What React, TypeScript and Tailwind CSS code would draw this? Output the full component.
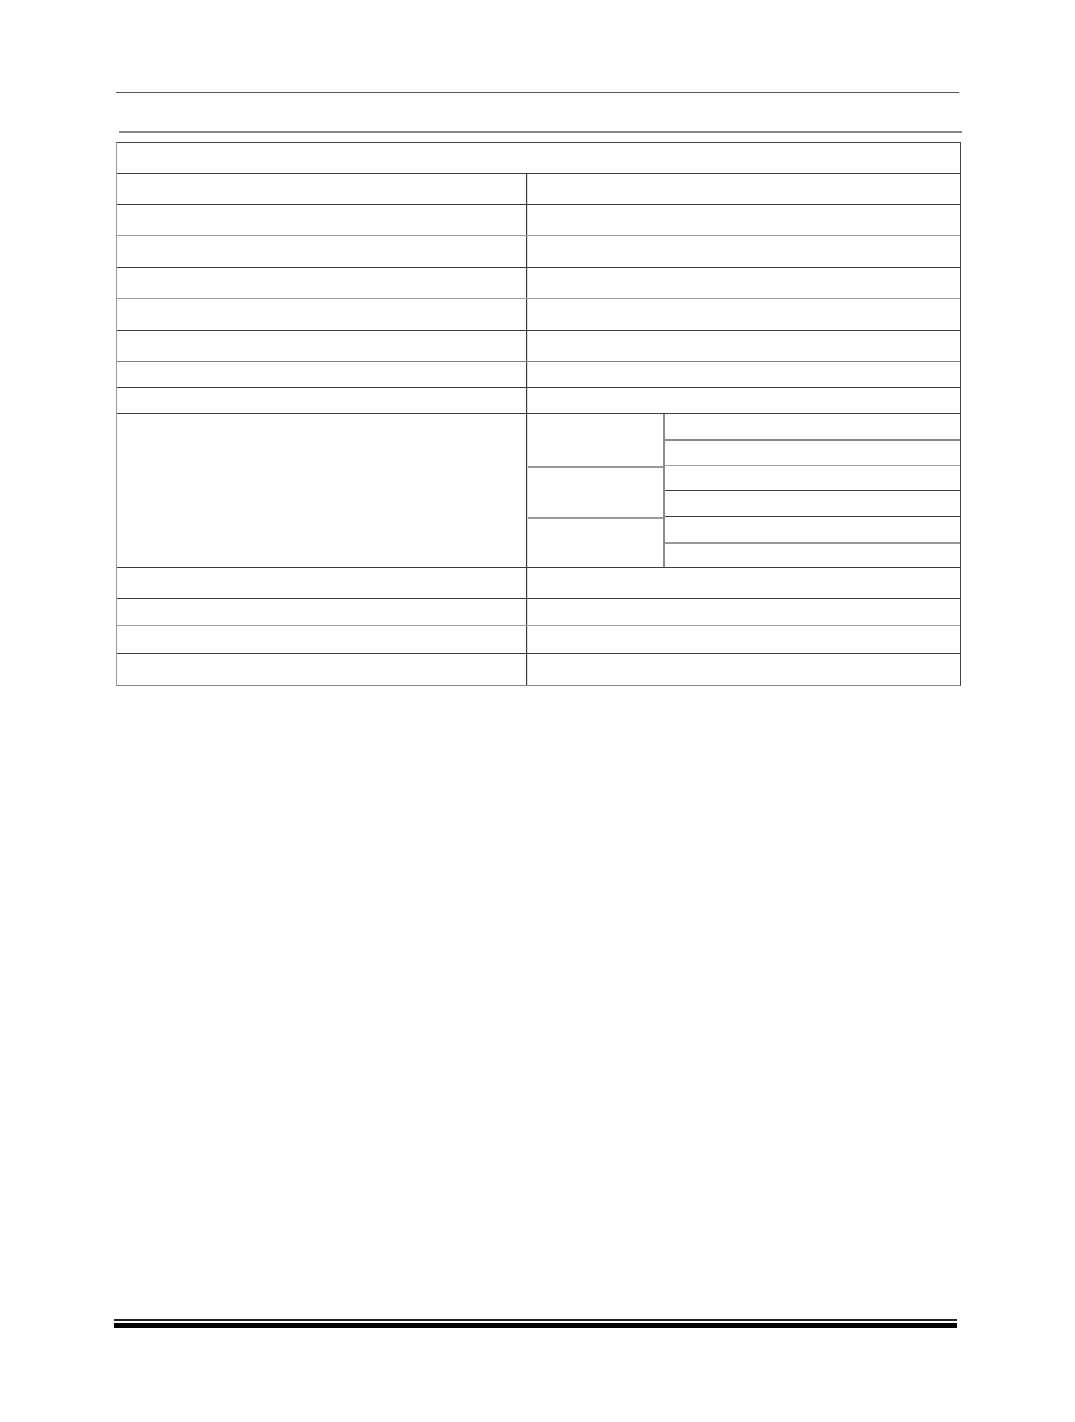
import React from "react";

// row heights (px) include the 1px top rule; colour mimics the scanned rules
const TOP_ROWS: { h: number; line: string }[] = [
  { h: 31, line: "border-[#3a3a3a]" },
  { h: 31, line: "border-[#3a3a3a]" },
  { h: 32, line: "border-[#a0a0a0]" },
  { h: 31, line: "border-[#3a3a3a]" },
  { h: 32, line: "border-[#a0a0a0]" },
  { h: 31, line: "border-[#3a3a3a]" },
  { h: 26, line: "border-[#808080]" },
  { h: 26, line: "border-[#3a3a3a]" },
];

const BOTTOM_ROWS: { h: number; line: string }[] = [
  { h: 31, line: "border-[#3a3a3a]" },
  { h: 27, line: "border-[#3a3a3a]" },
  { h: 28, line: "border-[#a0a0a0]" },
  { h: 32, line: "border-[#3a3a3a]" },
];

function SplitRow({ h, line }: { h: number; line: string }) {
  return (
    <div className={`flex border-t ${line}`} style={{ height: h }}>
      <div className="w-[410px] shrink-0 border-r border-r-[#3a3a3a]" />
      <div className="flex-1 border-l border-l-[#dcdcdc]" />
    </div>
  );
}

function SubCell({ line }: { line: string }) {
  return <div className={`h-[25.7px] border-t ${line}`} />;
}

export default function App() {
  return (
    <div className="relative h-[1422px] w-[1075px] bg-white font-['Liberation_Sans',sans-serif]">
      <div className="pt-[92px]">
        {/* header rules */}
        <div className="ml-[116px] h-px w-[843px] bg-[#555]" />
        <div className="ml-[119px] mt-[38px] h-[2px] w-[843px] bg-[#888]" />

        {/* empty form table */}
        <div className="ml-[116px] mt-[9px] w-[845px] border-x border-b border-l-[#9a9a9a] border-r-[#444] border-b-[#888] border-t border-t-[#444]">
          <div className="h-[30px]" />
          {TOP_ROWS.map((r, i) => (
            <SplitRow key={i} h={r.h} line={r.line} />
          ))}

          <div className="flex h-[154px] border-t border-[#3a3a3a]">
            <div className="w-[410px] shrink-0 border-r border-r-[#3a3a3a]" />
            <div className="flex w-[138px] shrink-0 flex-col border-l border-l-[#dcdcdc] border-r-2 border-r-[#8a8a8a]">
              <div className="h-[52px]" />
              <div className="h-[51px] border-t-2 border-[#999]" />
              <div className="flex-1 border-t-2 border-[#999]" />
            </div>
            <div className="flex flex-1 flex-col">
              <div className="h-[25px]" />
              <SubCell line="border-t-2 border-[#8a8a8a]" />
              <SubCell line="border-[#a0a0a0]" />
              <SubCell line="border-[#3a3a3a]" />
              <SubCell line="border-[#3a3a3a]" />
              <div className="flex-1 border-t-2 border-[#999]" />
            </div>
          </div>

          {BOTTOM_ROWS.map((r, i) => (
            <SplitRow key={i} h={r.h} line={r.line} />
          ))}
        </div>

        {/* footer rules */}
        <div className="ml-[114px] mt-[633px] h-[2px] w-[843px] bg-[#222]" />
        <div className="ml-[114px] mt-[2px] h-[5px] w-[843px] bg-black" />
      </div>
    </div>
  );
}
